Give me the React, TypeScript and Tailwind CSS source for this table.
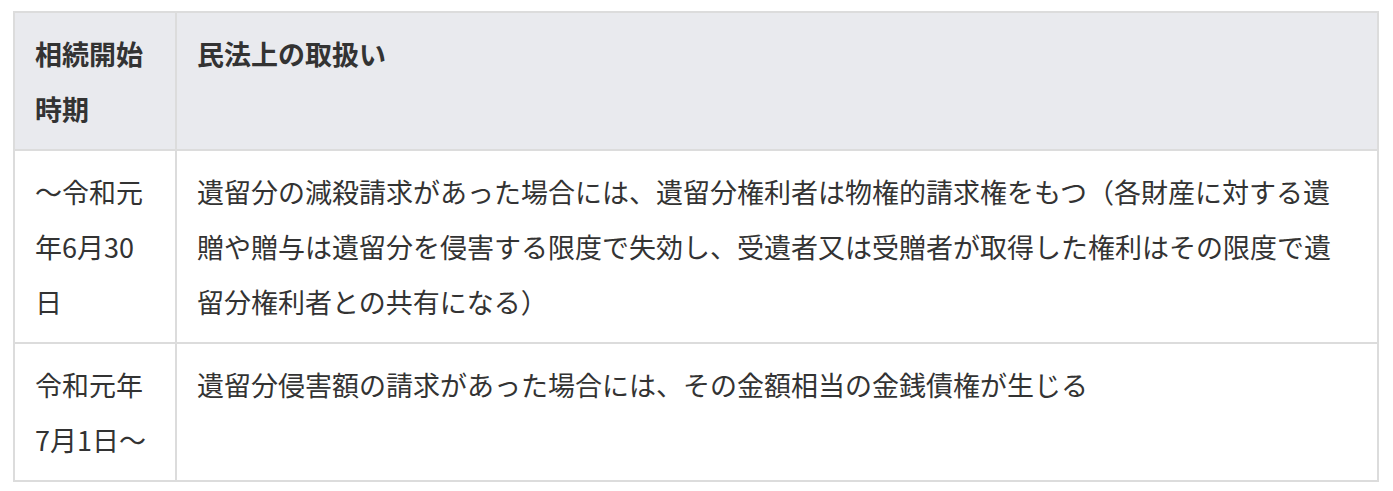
const rows = [
    {
        period: ['～令和元', '年6月30', '日'],
        rule: [
            '遺留分の減殺請求があった場合には、遺留分権利者は物権的請求権をもつ（各財産に対する遺',
            '贈や贈与は遺留分を侵害する限度で失効し、受遺者又は受贈者が取得した権利はその限度で遺',
            '留分権利者との共有になる）',
        ],
    },
    {
        period: ['令和元年', '7月1日～'],
        rule: ['遺留分侵害額の請求があった場合には、その金額相当の金銭債権が生じる'],
    },
]

function Lines({ lines }: { lines: string[] }) {
    return (
        <>
            {lines.map((l, i) => (
                <div key={i} className="whitespace-nowrap">{l}</div>
            ))}
        </>
    )
}

export default function App() {
    return (
        <div className="min-h-screen bg-white pt-[11px] pl-[13px] text-[#333] text-[27px] leading-[55px] [font-family:'Noto_Sans_CJK_JP','Noto_Sans',sans-serif]">
            <div className="w-[1366px] border-2 border-[#dcdcdc]">
                <div className="flex bg-[#e9eaee] border-b-2 border-[#dcdcdc] font-bold">
                    <div className="w-[162px] shrink-0 border-r-2 border-[#dcdcdc] py-[13px] pl-[20px]">
                        <Lines lines={['相続開始', '時期']} />
                    </div>
                    <div className="flex-1 py-[13px] pl-[20px]">民法上の取扱い</div>
                </div>
                {rows.map((row, i) => (
                    <div
                        key={i}
                        className={cn('flex', i < rows.length - 1 && 'border-b-2 border-[#dcdcdc]')}
                    >
                        <div className="w-[162px] shrink-0 border-r-2 border-[#dcdcdc] py-[13px] pl-[20px]">
                            <Lines lines={row.period} />
                        </div>
                        <div className="flex-1 py-[13px] pl-[20px]">
                            <Lines lines={row.rule} />
                        </div>
                    </div>
                ))}
            </div>
        </div>
    )
}

function cn(...classes: (string | boolean | undefined)[]) {
    return classes.filter(Boolean).join(' ')
}
